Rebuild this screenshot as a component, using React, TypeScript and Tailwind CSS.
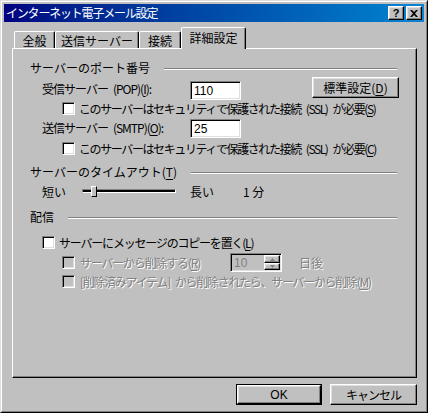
import React from "react";

const FONT = "font-['Noto_Sans_CJK_JP','Noto_Sans_CJK_SC',sans-serif]";
const RAISED =
  "border border-t-white border-l-white border-r-black border-b-black shadow-[inset_-1px_-1px_0_#808080,inset_1px_1px_0_#dfdfdf]";
const SUNKEN =
  "border border-t-[#808080] border-l-[#808080] border-r-white border-b-white shadow-[inset_1px_1px_0_#000,inset_-1px_-1px_0_#dfdfdf]";
const DIS = "text-[#808080] [text-shadow:1px_1px_0_#fff]";

function U({ children }: { children: React.ReactNode }) {
  return <span className="underline underline-offset-2">{children}</span>;
}

function Sp() {
  return <span className="inline-block w-[5px]" />;
}

function Check({ disabled = false }: { disabled?: boolean }) {
  return (
    <div
      className={`w-[13px] h-[13px] shrink-0 ${SUNKEN} ${disabled ? "bg-[#c0c0c0]" : "bg-white"}`}
    />
  );
}

function GroupHeader({ children, lineStart }: { children: React.ReactNode; lineStart: number }) {
  return (
    <div className="flex h-[14px] items-start pl-[17px] pr-[19px]">
      <div className="text-[12px] leading-[14px] whitespace-nowrap">{children}</div>
      <div className="flex-1 mt-[7px] border-t border-t-[#808080] border-b border-b-white" style={{ marginLeft: lineStart }} />
    </div>
  );
}

function Tab({ w, children, selected = false }: { w: string; children: React.ReactNode; selected?: boolean }) {
  if (selected) {
    return (
      <div
        className={`${w} h-[22px] -mb-[1px] relative z-10 bg-[#c0c0c0] border-t border-l border-t-white border-l-white border-r border-r-black shadow-[inset_-1px_0_0_#808080] rounded-t-[2px] flex items-start justify-center pt-[3px] text-[12px] leading-[14px]`}
      >
        {children}
      </div>
    );
  }
  return (
    <div
      className={`${w} h-[17px] border-t border-l border-t-white border-l-white border-r border-r-black shadow-[inset_-1px_0_0_#808080] rounded-t-[2px] flex items-start justify-center pt-[2px] text-[12px] leading-[14px]`}
    >
      {children}
    </div>
  );
}

export default function App() {
  return (
    <div className={`w-[428px] h-[413px] bg-[#c0c0c0] text-black ${FONT} border border-t-[#dfdfdf] border-l-[#dfdfdf] border-r-black border-b-black`}>
      <div className="w-full h-full border border-t-white border-l-white border-r-[#808080] border-b-[#808080] p-[2px] flex flex-col">
        {/* Title bar */}
        <div className="h-[18px] flex items-center bg-gradient-to-r from-[#000080] to-[#1084d0] pl-[2px] pr-[2px]">
          <div className="text-white text-[12px] leading-[14px] whitespace-nowrap tracking-[-1.2px]">
            インターネット電子メール設定
          </div>
          <div className="flex-1" />
          <div className={`w-[16px] h-[14px] bg-[#c0c0c0] ${RAISED} flex items-center justify-center text-[11px] font-bold leading-none font-['Liberation_Sans',sans-serif]`}>
            ?
          </div>
          <div className={`w-[16px] h-[14px] ml-[2px] bg-[#c0c0c0] ${RAISED} flex items-center justify-center`}>
            <svg width="8" height="7" viewBox="0 0 8 7">
              <path d="M0 0h2l2 2 2-2h2L5 3.5 8 7H6L4 5 2 7H0l3-3.5z" fill="#000" />
            </svg>
          </div>
        </div>

        {/* Tabs */}
        <div className="ml-[8px] mt-[5px] h-[21px] flex items-end pl-[2px]">
          <Tab w="w-[41px]">全般</Tab>
          <Tab w="w-[84px]">送信サーバー</Tab>
          <Tab w="w-[42px]">接続</Tab>
          <Tab w="w-[65px]" selected>
            詳細設定
          </Tab>
        </div>

        {/* Panel */}
        <div className="ml-[8px] w-[405px] h-[330px] border border-t-white border-l-white border-r-black border-b-black shadow-[inset_-1px_-1px_0_#808080] flex flex-col text-[12px] leading-[14px]">
          <div className="mt-[12px]">
            <GroupHeader lineStart={14}>サーバーのポート番号</GroupHeader>
          </div>

          {/* POP row */}
          <div className="mt-[2px] h-[24px] flex items-start pl-[29px]">
            <div className="w-[148px] mt-[5px] whitespace-nowrap tracking-[-1px]">
              受信サーバー<Sp />(POP)(<U>I</U>):
            </div>
            <div className={`w-[51px] h-[19px] mt-[4px] bg-white ${SUNKEN} pl-[3px] flex items-center font-['Liberation_Sans',sans-serif] text-[12px]`}>
              110
            </div>
            <div className={`ml-[71px] w-[87px] h-[21px] ${RAISED} flex items-center justify-center whitespace-nowrap`}>
              標準設定(<U>D</U>)
            </div>
          </div>

          {/* SSL 1 */}
          <div className="mt-[1px] h-[13px] flex items-center pl-[49px]">
            <Check />
            <div className="ml-[4px] whitespace-nowrap tracking-[-1.4px]">
              このサーバーはセキュリティで保護された接続<Sp />(SSL)<Sp />が必要(<U>S</U>)
            </div>
          </div>

          {/* SMTP row */}
          <div className="mt-[3px] h-[20px] flex items-start pl-[29px]">
            <div className="w-[148px] mt-[3px] whitespace-nowrap tracking-[-1px]">
              送信サーバー<Sp />(SMTP)(<U>O</U>):
            </div>
            <div className={`w-[51px] h-[19px] mt-[1px] bg-white ${SUNKEN} pl-[3px] flex items-center font-['Liberation_Sans',sans-serif] text-[12px]`}>
              25
            </div>
          </div>

          {/* SSL 2 */}
          <div className="mt-[4px] h-[13px] flex items-center pl-[49px]">
            <Check />
            <div className="ml-[4px] whitespace-nowrap tracking-[-1.4px]">
              このサーバーはセキュリティで保護された接続<Sp />(SSL)<Sp />が必要(<U>C</U>)
            </div>
          </div>

          <div className="mt-[10px]">
            <GroupHeader lineStart={14}>
              サーバーのタイムアウト(<U>T</U>)
            </GroupHeader>
          </div>

          {/* Slider row */}
          <div className="mt-[5px] h-[16px] flex items-center pl-[29px]">
            <div className="w-[40px] whitespace-nowrap">短い</div>
            <div className="w-[94px] h-[16px] relative">
              <div className="absolute left-0 right-0 top-[5px] h-[4px] border-t border-t-[#808080] border-l border-l-[#808080] border-b border-b-white border-r border-r-white bg-black" />
              <div className="absolute left-[9px] top-[2px] w-[6px] h-[11px] bg-[#c0c0c0] border border-t-white border-l-white border-r-black border-b-black" />
            </div>
            <div className="ml-[14px] whitespace-nowrap">長い</div>
            <div className="ml-[29px] whitespace-nowrap">1 分</div>
          </div>

          <div className="mt-[10px]">
            <GroupHeader lineStart={14}>配信</GroupHeader>
          </div>

          {/* Leave copy */}
          <div className="mt-[12px] h-[13px] flex items-center pl-[29px]">
            <Check />
            <div className="ml-[4px] whitespace-nowrap tracking-[-1.2px]">
              サーバーにメッセージのコピーを置く(<U>L</U>)
            </div>
          </div>

          {/* Remove after */}
          <div className="mt-[4px] h-[19px] flex items-center pl-[49px]">
            <Check disabled />
            <div className={`ml-[5px] w-[150px] whitespace-nowrap tracking-[-1.2px] ${DIS}`}>
              サーバーから削除する(<U>R</U>)
            </div>
            <div className={`w-[52px] h-[19px] ${SUNKEN} bg-[#c0c0c0] flex items-center`}>
              <div className="flex-1 pl-[3px] font-['Liberation_Sans',sans-serif] text-[12px] text-[#808080]">10</div>
              <div className="w-[16px] h-[15px] mr-[1px] flex flex-col">
                <div className={`h-[8px] ${RAISED} flex items-center justify-center`}>
                  <svg width="5" height="3" viewBox="0 0 5 3"><path d="M2.5 0L5 3H0z" fill="#808080" /></svg>
                </div>
                <div className={`h-[7px] ${RAISED} flex items-center justify-center`}>
                  <svg width="5" height="3" viewBox="0 0 5 3"><path d="M0 0h5L2.5 3z" fill="#808080" /></svg>
                </div>
              </div>
            </div>
            <div className={`ml-[17px] whitespace-nowrap ${DIS}`}>日後</div>
          </div>

          {/* Remove when deleted */}
          <div className="mt-[3px] h-[13px] flex items-center pl-[49px]">
            <Check disabled />
            <div className={`ml-[5px] whitespace-nowrap tracking-[-1.3px] ${DIS}`}>
              [削除済みアイテム]<Sp />から削除されたら、サーバーから削除(<U>M</U>)
            </div>
          </div>
        </div>

        {/* Buttons */}
        <div className="mt-[6px] flex justify-end pr-[7px] gap-[8px]">
          <div className="w-[86px] h-[21px] border border-black">
            <div className={`w-full h-full ${RAISED} flex items-center justify-center text-[12px] font-['Liberation_Sans',sans-serif]`}>
              OK
            </div>
          </div>
          <div className={`w-[87px] h-[21px] ${RAISED} flex items-center justify-center text-[12px] whitespace-nowrap tracking-[-1px]`}>
            キャンセル
          </div>
        </div>
      </div>
    </div>
  );
}
